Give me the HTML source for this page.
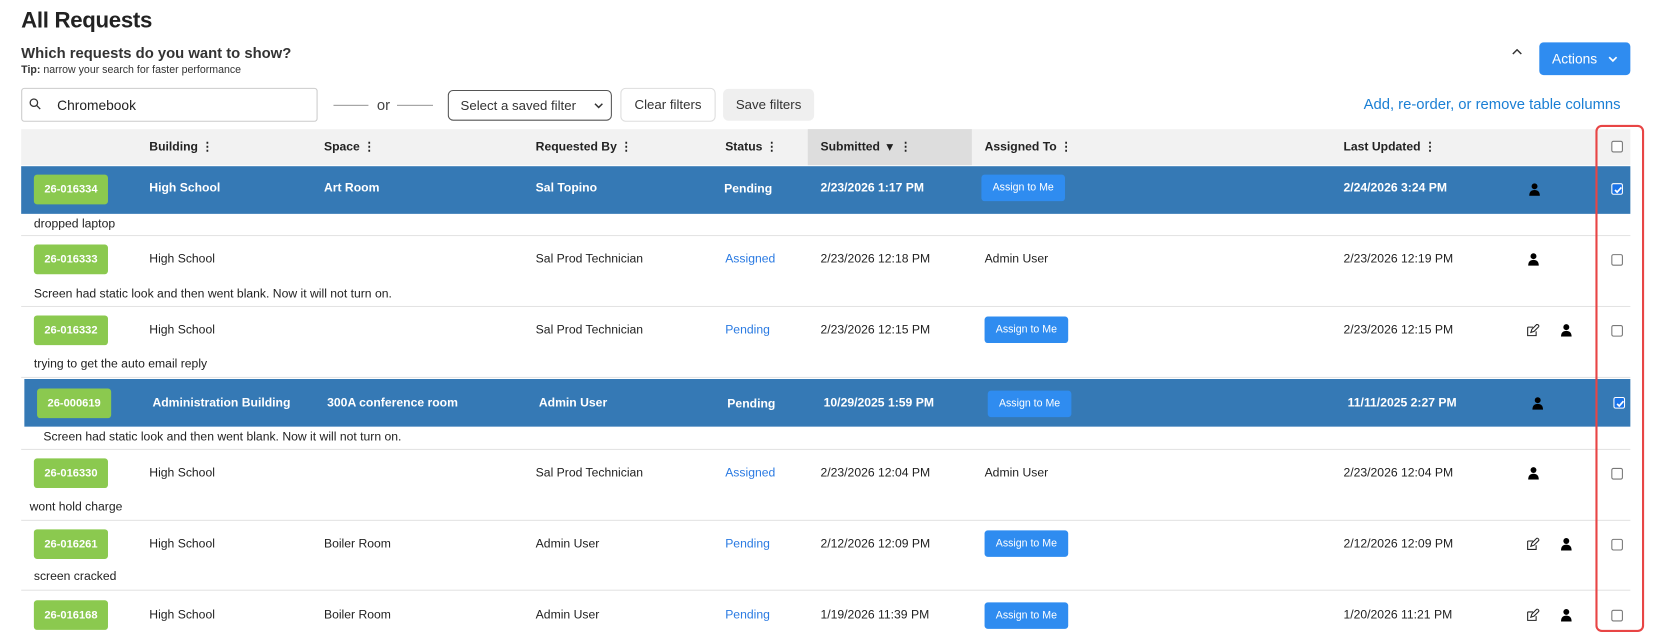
<!DOCTYPE html>
<html><head><meta charset="utf-8"><style>
*{box-sizing:border-box;margin:0;padding:0}
body{width:1660px;height:632px;background:#fff;font-family:"Liberation Sans",sans-serif;color:#222;position:relative;overflow:hidden;font-size:12px}
#w{position:absolute;left:0;top:0;width:1568px;height:597px;transform:scale(1.05867);transform-origin:0 0}
.a{position:absolute;white-space:nowrap}
h1{position:absolute;left:20px;top:8px;font-size:21px;font-weight:bold;color:#222;letter-spacing:-0.3px}
.hdr{position:absolute;left:20px;top:122px;width:1520px;height:34px;background:#f2f2f2}
.sub{position:absolute;left:763px;top:122px;width:155px;height:34px;background:#ddd}
.th{font-weight:bold;font-size:11.5px;top:131px}
.row{position:absolute;left:20px;width:1520px;height:45px}
.sel{background:#3579b5;color:#fff}
.sep{position:absolute;left:20px;width:1520px;height:1px;background:#e3e3e3}
.badge{position:absolute;width:70px;height:28px;background:#8bc94f;color:#fff;border-radius:3px;font-weight:bold;font-size:10.5px;text-align:center;line-height:28px}
.btn{position:absolute;width:79px;height:25px;background:#2f8cf0;color:#fff;border-radius:3px;font-size:10px;text-align:center;line-height:25px}
.cb{position:absolute;width:11px;height:11px;border:1px solid #777;border-radius:2px;background:#fff}
.cbc{background:#1a73e8;border-color:#fff}
.cbc svg{position:absolute;left:0;top:0}
.blue{color:#2a7ae2}
.t{font-size:11.5px}
.w{color:#fff;font-weight:bold;font-size:11.5px}
.p{position:absolute;width:11px;height:12px}
</style></head><body><div id="w">
<svg width="0" height="0" style="position:absolute"><defs><symbol id="pr" viewBox="0 0 11 12"><circle cx="5.5" cy="3" r="2.8" fill="#000"/><path d="M0.5 12C0.5 8 2.5 6.5 5.5 6.5S10.5 8 10.5 12Z" fill="#000"/></symbol><symbol id="ed" viewBox="0 0 12 12"><path d="M1 3h5M1 3v8h8V7" fill="none" stroke="#222" stroke-width="1"/><path d="M4 8l1-3 5-5 2 2-5 5z" fill="none" stroke="#222" stroke-width="1"/></symbol><symbol id="ck" viewBox="0 0 11 11"><path d="M2.5 5.5l2 2 4-4.5" fill="none" stroke="#fff" stroke-width="1.6"/></symbol></defs></svg>
<h1>All Requests</h1>
<div class="a" style="left:20px;top:42px;font-size:14px;font-weight:bold;color:#333">Which requests do you want to show?</div>
<div class="a" style="left:20px;top:61px;font-size:10px;color:#333"><b>Tip:</b> narrow your search for faster performance</div>
<div class="a" style="left:20px;top:83px;width:280px;height:32px;border:1px solid #ccc;border-radius:3px"></div>
<svg class="a" style="left:27px;top:92px" width="12" height="12" viewBox="0 0 12 12"><circle cx="5" cy="5" r="3.5" fill="none" stroke="#333" stroke-width="1.2"/><path d="M7.5 7.5L11 11" stroke="#333" stroke-width="1.2"/></svg>
<div class="a" style="left:54px;top:92px;font-size:13px">Chromebook</div>
<div class="a" style="left:315px;top:99px;width:33px;height:1px;background:#999"></div>
<div class="a" style="left:356px;top:91px;font-size:14px;color:#444">or</div>
<div class="a" style="left:375px;top:99px;width:34px;height:1px;background:#999"></div>
<div class="a" style="left:423px;top:85px;width:155px;height:29px;border:1px solid #555;border-radius:5px;padding:7px 11px;font-size:12.5px;color:#333">Select a saved filter<svg style="position:absolute;right:7px;top:11px" width="9" height="6" viewBox="0 0 9 6"><path d="M1 1l3.5 3.5L8 1" fill="none" stroke="#333" stroke-width="1.4"/></svg></div>
<div class="a" style="left:586px;top:83px;width:90px;height:32px;border:1px solid #ddd;border-radius:5px;font-size:12.5px;text-align:center;line-height:30px;color:#333">Clear filters</div>
<div class="a" style="left:683px;top:84px;width:86px;height:30px;background:#efefef;border-radius:5px;font-size:12.5px;text-align:center;line-height:30px;color:#333">Save filters</div>
<svg class="a" style="left:1428px;top:46px" width="10" height="6" viewBox="0 0 10 6"><path d="M1 5l4-4 4 4" fill="none" stroke="#333" stroke-width="1.4"/></svg>
<div class="a" style="left:1454px;top:40px;width:86px;height:31px;background:#2f8cf0;border-radius:4px;color:#fff;font-size:13px;line-height:31px;padding-left:12px">Actions<svg style="position:absolute;right:12px;top:13px" width="9" height="6" viewBox="0 0 9 6"><path d="M1 1l3.5 3.5L8 1" fill="none" stroke="#fff" stroke-width="1.6"/></svg></div>
<div class="a" style="left:1288px;top:90px;font-size:14px;color:#1a7fd4">Add, re-order, or remove table columns</div>

<div class="hdr"></div><div class="sub"></div>
<div class="a th" style="left:141px">Building &#8942;</div>
<div class="a th" style="left:306px">Space &#8942;</div>
<div class="a th" style="left:506px">Requested By &#8942;</div>
<div class="a th" style="left:685px">Status &#8942;</div>
<div class="a th" style="left:775px">Submitted &nbsp;&#9662; &nbsp;&#8942;</div>
<div class="a th" style="left:930px">Assigned To &#8942;</div>
<div class="a th" style="left:1269px">Last Updated &#8942;</div>
<div class="cb" style="left:1522px;top:133px"></div>

<div class="row sel" style="top:157px"></div>
<div class="badge" style="left:32px;top:165px">26-016334</div>
<div class="a w" style="left:141px;top:172px">High School</div>
<div class="a w" style="left:306px;top:172px">Art Room</div>
<div class="a w" style="left:506px;top:172px">Sal Topino</div>
<div class="a w" style="left:684px;top:173px">Pending</div>
<div class="a w" style="left:775px;top:172px">2/23/2026 1:17 PM</div>
<div class="btn" style="left:927px;top:165px">Assign to Me</div>
<div class="a w" style="left:1269px;top:172px">2/24/2026 3:24 PM</div>
<svg class="p" style="left:1444px;top:173px"><use href="#pr"/></svg>
<div class="cb cbc" style="left:1522px;top:173px"><svg width="11" height="11"><use href="#ck"/></svg></div>
<div class="a t" style="left:32px;top:206px">dropped laptop</div>
<div class="sep" style="top:222px"></div>

<div class="badge" style="left:32px;top:231px">26-016333</div>
<div class="a t" style="left:141px;top:239px">High School</div>
<div class="a t" style="left:506px;top:239px">Sal Prod Technician</div>
<div class="a t blue" style="left:685px;top:239px">Assigned</div>
<div class="a t" style="left:775px;top:239px">2/23/2026 12:18 PM</div>
<div class="a t" style="left:930px;top:239px">Admin User</div>
<div class="a t" style="left:1269px;top:239px">2/23/2026 12:19 PM</div>
<svg class="p" style="left:1443px;top:239px"><use href="#pr"/></svg>
<div class="cb" style="left:1522px;top:240px"></div>
<div class="a t" style="left:32px;top:272px">Screen had static look and then went blank. Now it will not turn on.</div>
<div class="sep" style="top:289px"></div>

<div class="badge" style="left:32px;top:298px">26-016332</div>
<div class="a t" style="left:141px;top:306px">High School</div>
<div class="a t" style="left:506px;top:306px">Sal Prod Technician</div>
<div class="a t blue" style="left:685px;top:306px">Pending</div>
<div class="a t" style="left:775px;top:306px">2/23/2026 12:15 PM</div>
<div class="btn" style="left:930px;top:299px">Assign to Me</div>
<div class="a t" style="left:1269px;top:306px">2/23/2026 12:15 PM</div>
<svg class="p" style="left:1442px;top:306px;width:12px"><use href="#ed"/></svg>
<svg class="p" style="left:1474px;top:306px"><use href="#pr"/></svg>
<div class="cb" style="left:1522px;top:307px"></div>
<div class="a t" style="left:32px;top:338px">trying to get the auto email reply</div>
<div class="sep" style="top:356px"></div>

<div class="row sel" style="top:358px;left:23px;width:1517px"></div>
<div class="badge" style="left:35px;top:367px">26-000619</div>
<div class="a w" style="left:144px;top:375px">Administration Building</div>
<div class="a w" style="left:309px;top:375px">300A conference room</div>
<div class="a w" style="left:509px;top:375px">Admin User</div>
<div class="a w" style="left:687px;top:376px">Pending</div>
<div class="a w" style="left:778px;top:375px">10/29/2025 1:59 PM</div>
<div class="btn" style="left:933px;top:369px">Assign to Me</div>
<div class="a w" style="left:1273px;top:375px">11/11/2025 2:27 PM</div>
<svg class="p" style="left:1447px;top:375px"><use href="#pr"/></svg>
<div class="cb cbc" style="left:1524px;top:375px"><svg width="11" height="11"><use href="#ck"/></svg></div>
<div class="a t" style="left:41px;top:407px">Screen had static look and then went blank. Now it will not turn on.</div>
<div class="sep" style="top:424px"></div>

<div class="badge" style="left:32px;top:433px">26-016330</div>
<div class="a t" style="left:141px;top:441px">High School</div>
<div class="a t" style="left:506px;top:441px">Sal Prod Technician</div>
<div class="a t blue" style="left:685px;top:441px">Assigned</div>
<div class="a t" style="left:775px;top:441px">2/23/2026 12:04 PM</div>
<div class="a t" style="left:930px;top:441px">Admin User</div>
<div class="a t" style="left:1269px;top:441px">2/23/2026 12:04 PM</div>
<svg class="p" style="left:1443px;top:441px"><use href="#pr"/></svg>
<div class="cb" style="left:1522px;top:442px"></div>
<div class="a t" style="left:28px;top:473px">wont hold charge</div>
<div class="sep" style="top:491px"></div>

<div class="badge" style="left:32px;top:500px">26-016261</div>
<div class="a t" style="left:141px;top:508px">High School</div>
<div class="a t" style="left:306px;top:508px">Boiler Room</div>
<div class="a t" style="left:506px;top:508px">Admin User</div>
<div class="a t blue" style="left:685px;top:508px">Pending</div>
<div class="a t" style="left:775px;top:508px">2/12/2026 12:09 PM</div>
<div class="btn" style="left:930px;top:501px">Assign to Me</div>
<div class="a t" style="left:1269px;top:508px">2/12/2026 12:09 PM</div>
<svg class="p" style="left:1442px;top:508px;width:12px"><use href="#ed"/></svg>
<svg class="p" style="left:1474px;top:508px"><use href="#pr"/></svg>
<div class="cb" style="left:1522px;top:509px"></div>
<div class="a t" style="left:32px;top:539px">screen cracked</div>
<div class="sep" style="top:557px"></div>

<div class="badge" style="left:32px;top:567px">26-016168</div>
<div class="a t" style="left:141px;top:575px">High School</div>
<div class="a t" style="left:306px;top:575px">Boiler Room</div>
<div class="a t" style="left:506px;top:575px">Admin User</div>
<div class="a t blue" style="left:685px;top:575px">Pending</div>
<div class="a t" style="left:775px;top:575px">1/19/2026 11:39 PM</div>
<div class="btn" style="left:930px;top:569px">Assign to Me</div>
<div class="a t" style="left:1269px;top:575px">1/20/2026 11:21 PM</div>
<svg class="p" style="left:1442px;top:575px;width:12px"><use href="#ed"/></svg>
<svg class="p" style="left:1474px;top:575px"><use href="#pr"/></svg>
<div class="cb" style="left:1522px;top:576px"></div>

<div class="a" style="left:1507px;top:118px;width:46px;height:479px;border:2px solid #e84545;border-radius:6px"></div>
</div></body></html>
